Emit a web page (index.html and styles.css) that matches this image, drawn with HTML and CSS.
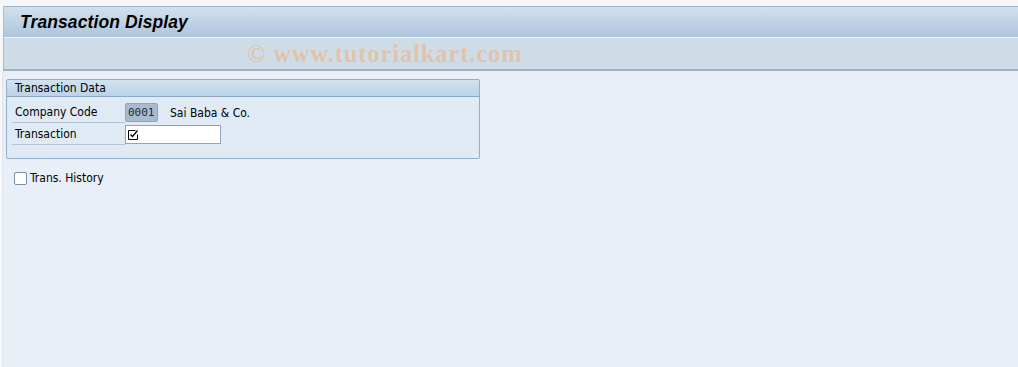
FILE: index.html
```html
<!DOCTYPE html>
<html>
<head>
<meta charset="utf-8">
<link rel="stylesheet" href="styles.css">
</head>
<body>
<div class="screen">
  <div class="topstrip"></div>
  <div class="titlebar"><h1 class="title">Transaction Display</h1></div>
  <div class="toolbar"><span class="watermark">© www.tutorialkart.com</span></div>
  <div class="content">
    <div class="group">
      <div class="group-head">Transaction Data</div>
      <div class="group-body">
        <div class="row">
          <span class="label">Company Code</span>
          <span class="field field-ro">0001</span>
          <span class="desc">Sai Baba &amp; Co.</span>
        </div>
        <div class="row">
          <span class="label">Transaction</span>
          <span class="field field-in"><svg class="chk" width="11" height="11" viewBox="0 0 11 11"><path d="M0.5 1.5H7.5M0.5 1.5V10.5H9.5V5.5" fill="none" stroke="#000" stroke-width="1"/><path d="M2.5 5.5L4.5 7.5L9.5 1.5" fill="none" stroke="#000" stroke-width="1.2"/></svg></span>
        </div>
      </div>
    </div>
    <label class="cb-row"><span class="cb"></span><span class="cb-text">Trans. History</span></label>
  </div>
</div>
</body>
</html>
```
FILE: styles.css
```css
html, body { margin: 0; padding: 0; }
body {
  width: 1018px; height: 367px; overflow: hidden;
  background: #f6f8fb;
  font-family: "DejaVu Sans Condensed", "Liberation Sans", sans-serif;
}
.screen { display: flex; flex-direction: column; height: 367px; }
.topstrip { height: 6px; background: #f5f7fa; }
.titlebar {
  margin-left: 3px;
  border-top: 1px solid #9fb2c6;
  border-left: 1px solid #a9bbcd;
  background: linear-gradient(#d2e0ec, #adc5dc);
  border-bottom: 1px solid #eef3f8;
  display: flex; align-items: center;
  box-sizing: border-box;
  height: 32px;
}
.title {
  margin: 0 0 0 16px;
  font-family: "Liberation Sans", Arial, sans-serif;
  font-weight: bold; font-style: italic;
  font-size: 17.5px; color: #000;
  letter-spacing: 0.1px;
}
.toolbar {
  height: 33px;
  box-sizing: border-box;
  margin-left: 3px;
  border-left: 1px solid #a9bbcd;
  border-bottom: 2px solid #9fb1c5;
  background: #cedce7;
  display: flex; align-items: center;
}
.watermark {
  margin-left: 243px;
  font-family: "Liberation Serif", "Times New Roman", serif;
  font-weight: bold; font-size: 24.5px;
  color: rgba(245, 165, 95, 0.45);
  letter-spacing: 0.9px;
}
.content {
  flex: 1;
  margin-left: 2px;
  border-left: 1px solid #dfe5ec;
  background: #e8eff6;
  padding: 8px 0 0 3px;
}
.group {
  width: 474px;
  border: 1px solid #94adc8;
  border-radius: 2px;
  background: #dfeaf5;
  box-sizing: border-box;
  height: 80px;
}
.group-head {
  height: 16px;
  background: linear-gradient(#d3e2f0, #bcd2e6);
  border-bottom: 1px solid #8ea8c3;
  font-size: 12px;
  line-height: 16px;
  padding-left: 8px;
  color: #000;
}
.group-body { padding: 5px 0 0 5px; }
.row {
  display: flex; align-items: center;
  height: 21px;
  margin-bottom: 1px;
}
.label {
  width: 113px;
  height: 20px;
  box-sizing: border-box;
  border-bottom: 1px solid #b3c3d5;
  padding-left: 3px;
  font-size: 12px;
  line-height: 19px;
  color: #000;
}
.field {
  box-sizing: border-box;
  height: 19px;
  display: flex; align-items: center;
  font-size: 12px;
}
.field-ro {
  width: 33px;
  background: #a9bccd;
  border: 1px solid #8ea4bb;
  border-radius: 2px;
  padding-left: 2px;
  font-family: "DejaVu Sans Mono", "Liberation Mono", monospace;
  font-size: 11px;
  color: #1a2a3a;
}
.field-in {
  width: 96px;
  background: #fff;
  border: 1px solid #8ea4bb;
  padding-left: 2px;
}
.chk { display: block; }
.desc {
  margin-left: 12px;
  font-size: 12px;
  color: #000;
}
.cb-row {
  display: flex; align-items: center;
  margin: 12px 0 0 8px;
}
.cb {
  width: 11px; height: 11px;
  border: 1px solid #7a8ea4;
  border-radius: 2px;
  background: #fff;
}
.cb-text {
  margin-left: 3px;
  font-size: 12px;
  color: #000;
}
```
